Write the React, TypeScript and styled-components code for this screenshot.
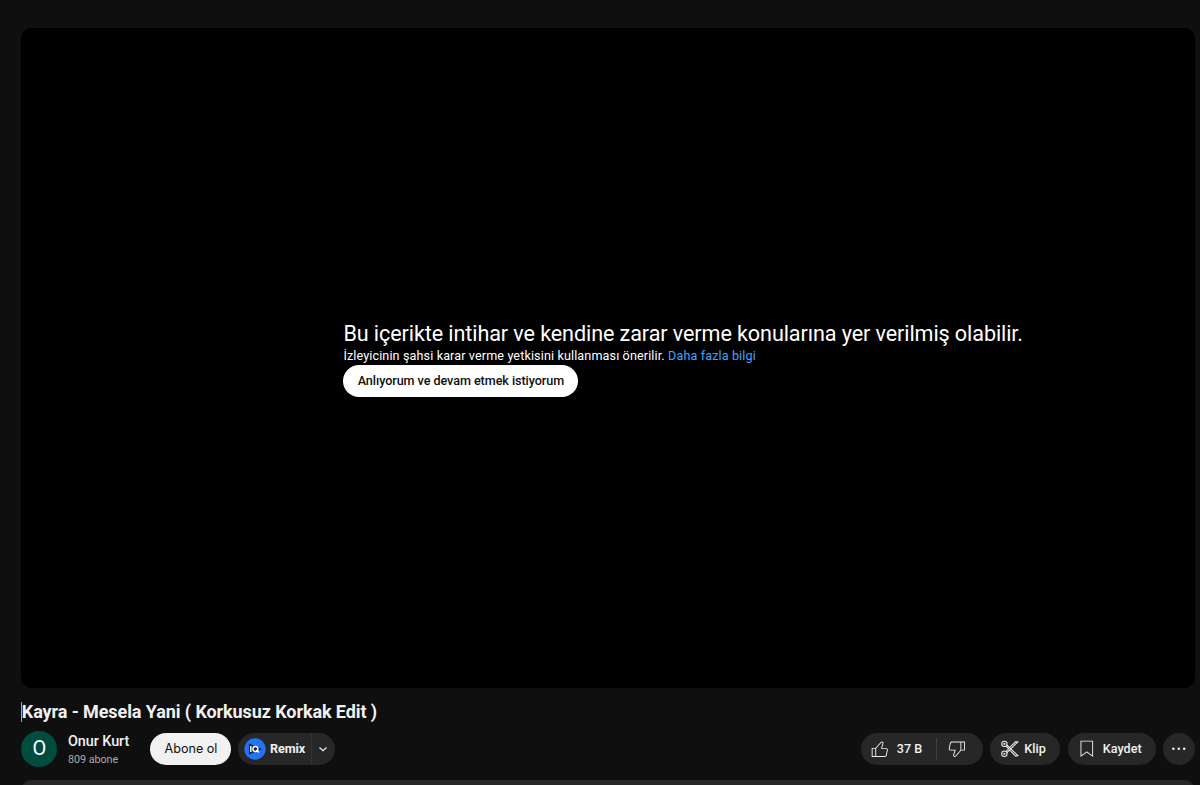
import React from "react";
import styled, { createGlobalStyle } from "styled-components";

const Global = createGlobalStyle`
  * { box-sizing: border-box; }
  html, body { margin: 0; background: #0f0f0f; overflow: hidden; }
  body { font-family: Roboto, "Liberation Sans", sans-serif; color: #f1f1f1; }
`;

const Page = styled.main`
  height: 785px;
  overflow: hidden;
  padding: 28px 4.8px 0 21.4px;
  display: flex;
  flex-direction: column;
`;

const Player = styled.section`
  flex: none;
  height: 660px;
  border-radius: 11px;
  background: #000;
  padding: 293px 0 0 322px;
`;

const WarningTitle = styled.h2`
  margin: 0;
  font-size: 21.6px;
  font-weight: 400;
  line-height: 25px;
  letter-spacing: -0.1px;
  color: #fff;
  white-space: nowrap;
`;

const WarningText = styled.p`
  margin: 0;
  padding-top: 1px;
  font-size: 12.6px;
  line-height: 18px;
  letter-spacing: 0.12px;
  color: #fff;
  white-space: nowrap;
`;

const Link = styled.a`
  color: #3ea6ff;
`;

const Pill = styled.button<{ $width: number; $light?: boolean }>`
  flex: none;
  width: ${(p) => p.$width}px;
  height: 32px;
  border: 0;
  padding: 0;
  border-radius: 16px;
  display: flex;
  align-items: center;
  font: 500 12.6px/32px Roboto, sans-serif;
  text-align: left;
  white-space: nowrap;
  background: ${(p) => (p.$light ? "#f1f1f1" : "#272727")};
  color: ${(p) => (p.$light ? "#0f0f0f" : "#f1f1f1")};
`;

const ConfirmButton = styled(Pill)`
  background: #fff;
  justify-content: center;
  letter-spacing: -0.06px;
`;

const Title = styled.h1`
  margin: 12px 0 0;
  height: 24px;
  display: flex;
  align-items: center;
  font-size: 18px;
  font-weight: 700;
  line-height: 24px;
  letter-spacing: -0.09px;
  white-space: nowrap;
`;

const Caret = styled.span`
  width: 1px;
  height: 20px;
  margin-right: -0.6px;
  background: #aaa;
`;

const Row = styled.div`
  display: flex;
  align-items: center;
  height: 36px;
  margin-top: 7px;
`;

const Avatar = styled.div`
  width: 36px;
  height: 36px;
  border-radius: 50%;
  background: #004d40;
  color: #fff;
  font-size: 20px;
  line-height: 35px;
  text-align: center;
`;

const Channel = styled.div`
  width: 82px;
  margin-left: 10.6px;
  padding-top: 2px;
  white-space: nowrap;
`;

const ChannelName = styled.div`
  font-size: 14.4px;
  font-weight: 500;
  line-height: 19px;
  letter-spacing: -0.06px;
`;

const Subscribers = styled.div`
  font-size: 10.8px;
  line-height: 17px;
  letter-spacing: -0.06px;
  color: #aaa;
`;

const Subscribe = styled(Pill)`
  justify-content: center;
  font-family: Inter, sans-serif;
  font-weight: 400;
  font-size: 12.6px;
  padding-left: 1px;
`;

const Remix = styled(Pill)`
  margin-left: 7.4px;
  padding-left: 6px;
  font-weight: 700;
`;

const RemixLabel = styled.span`
  width: 45px;
  padding-left: 3.5px;
  letter-spacing: -0.05px;
`;

const RemixMenu = styled.span`
  height: 32px;
  flex: 1;
  display: flex;
  align-items: center;
  padding-left: 6px;
  border-left: 1px solid #333;
`;

const Actions = styled.div`
  display: flex;
  gap: 7.5px;
  margin-left: auto;
`;

const Action = styled(Pill)<{ $gap: number }>`
  padding-left: 8.5px;
  gap: ${(p) => p.$gap}px;
`;

const Divider = styled.i`
  width: 1px;
  height: 22px;
  background: #3f3f3f;
`;

const LikeCount = styled.span`
  width: 33px;
`;

const Glyph = styled.svg`
  flex: none;
  width: 21.6px;
  height: 21.6px;
  fill: currentColor;
`;

const DislikeGlyph = styled(Glyph)`
  margin-left: 3px;
`;

const More = styled(Pill)`
  justify-content: center;
`;

const Description = styled.section`
  flex: none;
  height: 60px;
  margin-top: 13px;
  border-radius: 11px;
  background: #272727;
`;

const LikeIcon = () => (
  <Glyph viewBox="0 0 24 24">
    <path d="M18.77,11h-4.23l1.52-4.94C16.38,5.03,15.54,4,14.38,4c-0.58,0-1.14,0.24-1.52,0.65L7,11H3v10h4h1h9.43c1.06,0,1.98-0.67,2.19-1.61l1.34-6C21.23,12.15,20.18,11,18.77,11z M7,20H4v-8h3V20z M19.98,13.17l-1.34,6C18.54,19.65,18.03,20,17.43,20H8v-8.61l5.6-6.06C13.79,5.12,14.08,5,14.38,5c0.26,0,0.5,0.11,0.63,0.3c0.07,0.1,0.15,0.26,0.09,0.47l-1.52,4.94L13.18,12h1.35h4.23c0.41,0,0.8,0.17,1.03,0.46C19.92,12.61,20.05,12.86,19.98,13.17z" />
  </Glyph>
);

const DislikeIcon = () => (
  <DislikeGlyph viewBox="0 0 24 24">
    <path d="M17,4h-1H6.57C5.5,4,4.59,4.67,4.38,5.61l-1.34,6C2.77,12.85,3.82,14,5.23,14h4.23l-1.52,4.94C7.62,19.97,8.46,21,9.62,21c0.58,0,1.14-0.24,1.52-0.65L17,14h4V4H17z M10.4,19.67C10.21,19.88,9.92,20,9.62,20c-0.26,0-0.5-0.11-0.63-0.3c-0.07-0.1-0.15-0.26-0.09-0.47l1.52-4.94l0.4-1.29H9.46H5.23c-0.41,0-0.8-0.17-1.03-0.46c-0.12-0.15-0.25-0.4-0.18-0.72l1.34-6C5.46,5.35,5.97,5,6.57,5H16v8.61L10.4,19.67z M20,13h-3V5h3V13z" />
  </DislikeGlyph>
);

const ClipGlyph = styled(Glyph)`
  fill: none;
  stroke: currentColor;
  stroke-width: 1.15;
`;

const ClipIcon = () => (
  <ClipGlyph viewBox="0 0 24 24">
    <circle cx="6" cy="6.5" r="3" />
    <circle cx="6" cy="17.5" r="3" />
    <circle cx="6" cy="6.5" r="0.6" />
    <circle cx="6" cy="17.5" r="0.6" />
    <path d="M8.8 7.8 11.8 10.6 18.6 3.9 21 4.4 8.8 16.2M8.8 7.8 21 19.6 18.6 20.1 11.8 13.4M7.8 9 10.8 12 7.8 15" />
  </ClipGlyph>
);

const SaveIcon = () => (
  <Glyph viewBox="0 0 24 24">
    <path d="M18 4v15.06l-5.42-3.87-.58-.42-.58.42L6 19.06V4h12m1-1H5v18l7-5 7 5V3z" />
  </Glyph>
);

const BrandIcon = () => (
  <svg width="22" height="22" viewBox="0 0 22 22">
    <circle cx="11" cy="11" r="10.7" fill="#2472f5" />
    <path d="M5 5.5 18 11 5 16.5z" fill="#10203c" />
    <path d="M6.8 8v6" stroke="#fff" strokeWidth="1.5" />
    <circle cx="11.4" cy="11" r="2.5" stroke="#fff" strokeWidth="1.4" fill="#10203c" />
    <path d="m12.4 12 2.5 2.5" stroke="#fff" strokeWidth="1.4" />
  </svg>
);

export default function App() {
  return (
    <>
      <Global />
      <Page>
        <Player>
          <WarningTitle>Bu içerikte intihar ve kendine zarar verme konularına yer verilmiş olabilir.</WarningTitle>
          <WarningText>
            İzleyicinin şahsi karar verme yetkisini kullanması önerilir. <Link>Daha fazla bilgi</Link>
          </WarningText>
          <ConfirmButton $width={235} $light>Anlıyorum ve devam etmek istiyorum</ConfirmButton>
        </Player>
        <Title><Caret />Kayra - Mesela Yani ( Korkusuz Korkak Edit )</Title>
        <Row>
          <Avatar>O</Avatar>
          <Channel>
            <ChannelName>Onur Kurt</ChannelName>
            <Subscribers>809 abone</Subscribers>
          </Channel>
          <Subscribe $width={81} $light>Abone ol</Subscribe>
          <Remix $width={97}>
            <BrandIcon />
            <RemixLabel>Remix</RemixLabel>
            <RemixMenu>
              <svg width="10" height="10" viewBox="0 0 10 10" fill="none" stroke="#f1f1f1" strokeWidth="1.2">
                <path d="m1.5 3.5 3.5 3.3 3.5-3.3" />
              </svg>
            </RemixMenu>
          </Remix>
          <Actions>
            <Action $width={122} $gap={6}>
              <LikeIcon />
              <LikeCount>37 B</LikeCount>
              <Divider />
              <DislikeIcon />
            </Action>
            <Action $width={70} $gap={4}><ClipIcon />Klip</Action>
            <Action $width={88} $gap={5}><SaveIcon />Kaydet</Action>
            <More $width={32}>
              <Glyph viewBox="0 0 24 24">
                <circle cx="6" cy="12" r="1.4" />
                <circle cx="12" cy="12" r="1.4" />
                <circle cx="18" cy="12" r="1.4" />
              </Glyph>
            </More>
          </Actions>
        </Row>
        <Description />
      </Page>
    </>
  );
}
